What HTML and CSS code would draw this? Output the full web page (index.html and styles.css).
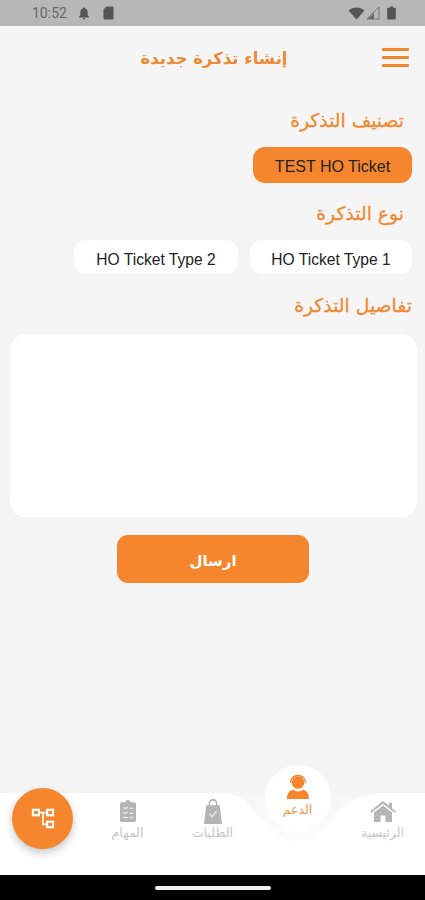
FILE: index.html
```html
<!DOCTYPE html>
<html lang="ar">
<head>
    <meta charset="UTF-8">
    <meta name="viewport" content="width=device-width, initial-scale=1.0">
    <title>إنشاء تذكرة جديدة</title>
    <link rel="stylesheet" href="styles.css">
</head>
<body>
    <div class="status-bar">
        <div class="status-left">
            <span class="status-time">10:52</span>
            <svg class="bell-icon" width="12" height="13" viewBox="0 0 12 13"><path d="M6 0.5c.7 0 1.1.5 1.1 1.1 1.7.5 2.6 1.9 2.6 3.7v3l1.3 1.5v.7H1v-.7l1.3-1.5v-3c0-1.800.9-3.200 2.600-3.700C4.900 1 5.300.5 6 .5zM4.700 11h2.600c0 .8-.6 1.500-1.300 1.500S4.700 11.800 4.700 11z" fill="#555"/></svg>
            <svg class="sim-icon" width="11" height="14" viewBox="0 0 11 14"><path d="M3.500.5H9.500a1 1 0 0 1 1 1v11a1 1 0 0 1-1 1h-8a1 1 0 0 1-1-1V3.500z" fill="#555"/></svg>
        </div>
        <div class="status-right">
            <svg width="17" height="13" viewBox="0 0 17 13"><path d="M.5 3.500C5-.5 12-.5 16.500 3.500L8.500 12.500z" fill="#555"/></svg>
            <svg width="14" height="14" viewBox="0 0 14 14"><path d="M13 1v12H1z" fill="none" stroke="#777" stroke-width="1"/><path d="M8 7v6H2z" fill="#666"/></svg>
            <svg class="battery-icon" width="9" height="14" viewBox="0 0 9 14"><path d="M3 .5h3v1.200h2a.8.8 0 0 1 .8.8v10.200a.8.8 0 0 1-.8.8H1a.8.8 0 0 1-.8-.8V2.500a.8.8 0 0 1 .8-.8h2z" fill="#555"/></svg>
        </div>
    </div>

    <header class="top-bar">
        <h1>إنشاء تذكرة جديدة</h1>
        <div class="menu-btn"><span></span><span></span><span></span></div>
    </header>

    <main class="content">
        <h2 class="section-title">تصنيف التذكرة</h2>
        <div class="chip-row">
            <div class="chip chip-active">TEST HO Ticket</div>
        </div>

        <h2 class="section-title section-title-second">نوع التذكرة</h2>
        <div class="chip-row">
            <div class="chip chip-type-one">HO Ticket Type 1</div>
            <div class="chip chip-type-two">HO Ticket Type 2</div>
        </div>

        <h2 class="section-title section-title-details">تفاصيل التذكرة</h2>
        <textarea class="details-box"></textarea>

        <button class="send-btn" type="button">ارسال</button>
    </main>

    <nav class="bottom-nav">
        <svg class="nav-notch" width="425" height="50" viewBox="0 0 425 50">
            <defs>
                <linearGradient id="notchFill" x1="0" y1="0" x2="0" y2="1">
                    <stop offset="0" stop-color="#f6f6f6"/>
                    <stop offset="1" stop-color="#fdfdfd"/>
                </linearGradient>
            </defs>
            <path d="M222 0C245 1 252 17 262 27C272 40 284 49 298 49C312 49 324 38 335 24C342 14 350 5 372 2L376 0Z" fill="url(#notchFill)"/>
        </svg>

        <div class="nav-cell">
            <div class="fab">
                <svg width="24" height="21" viewBox="0 0 26 23" fill="none" stroke="#fff" stroke-width="2.400">
                    <rect x="2" y="2" width="6.500" height="6"/>
                    <rect x="17.500" y="2" width="6.500" height="6"/>
                    <rect x="17.500" y="15" width="6.500" height="6"/>
                    <path d="M8.500 5H17.500M13 5V18H17.500" stroke-width="1.800"/>
                </svg>
            </div>
        </div>

        <div class="nav-cell nav-item">
            <svg width="16" height="22" viewBox="0 0 18 24" preserveAspectRatio="none">
                <path d="M6 2.500C6 1 7.300 0 9 0s3 1 3 2.500h4a2 2 0 0 1 2 2V22a2 2 0 0 1-2 2H2a2 2 0 0 1-2-2V4.500a2 2 0 0 1 2-2z" fill="#b5b5b5"/>
                <path d="M3.500 8.500h2l1 1 2-2M11 9h4M3.500 14h2l1 1 2-2M11 14.500h4M3.500 19h5M11 19h4" fill="none" stroke="#eee" stroke-width="1.300"/>
            </svg>
            <span class="nav-label">المهام</span>
        </div>

        <div class="nav-cell nav-item">
            <svg class="bag-icon" width="18" height="25" viewBox="0 0 20 24" preserveAspectRatio="none">
                <path d="M2.500 6H17.500L20 24H0z" fill="#b5b5b5"/>
                <path d="M6 8V4.500C6 2 7.800.8 10 .8S14 2 14 4.500V8" fill="none" stroke="#b5b5b5" stroke-width="1.600"/>
                <path d="M6 14l3 3 5-5.500" fill="none" stroke="#e8e8e8" stroke-width="1.500"/>
            </svg>
            <span class="nav-label">الطلبات</span>
        </div>

        <div class="nav-cell nav-support">
            <div class="support-circle">
                <svg width="22" height="24" viewBox="0 0 22 24">
                    <circle cx="11" cy="7.500" r="6.300" fill="#f5862d"/>
                    <path d="M3.500 8C3.500 3 7 .5 11 .5S18.500 3 18.500 8" fill="none" stroke="#f5862d" stroke-width="1.400"/>
                    <path d="M0 24c0-5 1.500-8 6-9.500 1.500 1.300 3 2 5 2s3.500-.7 5-2c4.500 1.500 6 4.500 6 9.500z" fill="#f5862d"/>
                    <path d="M5 12c1.500 3 4 3.500 7 3.300" fill="none" stroke="#fff" stroke-width="1"/>
                </svg>
                <span class="nav-label nav-label-active">الدعم</span>
            </div>
        </div>

        <div class="nav-cell nav-item">
            <svg width="26" height="22" viewBox="0 0 26 24" preserveAspectRatio="none">
                <path d="M13 1L0 12.500l1.300 1.500L13 4l11.700 10 1.300-1.500-4-3.500V3h-3v3.400z" fill="#b5b5b5"/>
                <path d="M13 6L4 13.600V24h6.500v-7h5v7H22V13.600z" fill="#b5b5b5"/>
            </svg>
            <span class="nav-label">الرئيسية</span>
        </div>
    </nav>

    <div class="gesture-bar"><span></span></div>
</body>
</html>
```

FILE: styles.css
```css
body {
    font-family: "DejaVu Sans", sans-serif;
    margin: 0;
    height: 900px;
    display: flex;
    flex-direction: column;
    background-color: #f5f5f5;
    overflow: hidden;
}
.status-bar {
    height: 26px;
    background-color: #b7b7b7;
    display: flex;
    align-items: center;
    justify-content: space-between;
    padding: 0 29px 0 32px;
}
.status-left {
    display: flex;
    align-items: center;
}
.status-right {
    display: flex;
    align-items: center;
    gap: 1px;
}
.status-time {
    font-family: Roboto, sans-serif;
    font-size: 14px;
    color: #666;
}
.bell-icon {
    margin-left: 11px;
}
.sim-icon {
    margin-left: 13px;
}
.battery-icon {
    margin-left: 6px;
}
.top-bar {
    height: 66px;
    box-sizing: border-box;
    display: flex;
    align-items: center;
    padding: 0 16px 4px 0;
}
.top-bar h1 {
    flex: 1;
    margin: 2px 0 0;
    padding-left: 46px;
    font-size: 16.500px;
    font-weight: bold;
    text-align: center;
    color: #ec8a37;
    direction: rtl;
    white-space: nowrap;
}
.menu-btn {
    width: 27px;
    display: flex;
    flex-direction: column;
    gap: 5px;
}
.menu-btn span {
    height: 3px;
    background-color: #f0842a;
    border-radius: 1px;
}
.content {
    flex: 1;
    display: flex;
    flex-direction: column;
    direction: rtl;
}
.section-title {
    margin: 18px 21px 0 0;
    font-size: 18.800px;
    font-weight: normal;
    line-height: 22px;
    color: #ef8a33;
    -webkit-text-stroke: 0.3px #ef8a33;
}
.section-title-second {
    margin-top: 20px;
}
.section-title-details {
    margin: 21px 13px 0 0;
}
.chip-row {
    display: flex;
    gap: 12px;
    margin-top: 15px;
    padding-right: 13px;
}
.chip {
    font-family: "Liberation Sans", Arial, sans-serif;
    font-size: 15.600px;
    color: #222;
    background-color: #fff;
    height: 34px;
    box-sizing: border-box;
    padding-top: 5px;
    border-radius: 12px;
    display: flex;
    align-items: center;
    justify-content: center;
    direction: ltr;
}
.chip-active {
    width: 159px;
    height: 36px;
    padding-top: 4px;
    font-size: 16px;
    background-color: #f5862d;
}
.chip-type-one {
    width: 162px;
}
.chip-type-two {
    width: 164px;
}
.details-box {
    display: block;
    width: 407px;
    height: 183px;
    margin: 17px 8px 0 0;
    padding: 12px;
    box-sizing: border-box;
    border: none;
    border-radius: 16px;
    background-color: #fff;
    resize: none;
    outline: none;
}
.send-btn {
    align-self: flex-start;
    width: 192px;
    height: 48px;
    margin: 18px 116px 0 0;
    padding-top: 5px;
    border: none;
    border-radius: 11px;
    background-color: #f5862d;
    color: #fff;
    font-family: "DejaVu Sans", sans-serif;
    font-size: 15px;
    font-weight: bold;
}
.bottom-nav {
    position: relative;
    height: 82px;
    background-color: #fff;
    display: grid;
    grid-template-columns: repeat(5, 85px);
    align-items: start;
}
.nav-notch {
    position: absolute;
    left: 0;
    top: 0;
}
.nav-cell {
    position: relative;
    display: flex;
    flex-direction: column;
    align-items: center;
}
.nav-item {
    padding-top: 7px;
}
.bag-icon {
    margin-top: -1px;
    margin-bottom: -2px;
}
.nav-label {
    font-size: 12.500px;
    line-height: 14px;
    margin-top: 4px;
    color: #c6c6c6;
    direction: rtl;
    white-space: nowrap;
}
.nav-label-active {
    color: #f2994f;
}
.fab {
    width: 61px;
    height: 61px;
    margin-top: -5px;
    border-radius: 50%;
    background-color: #f5862d;
    box-shadow: 0 4px 8px rgba(0,0,0,0.22);
    display: flex;
    align-items: center;
    justify-content: center;
}
.nav-support {
    margin-top: -28px;
}
.support-circle {
    width: 66px;
    height: 66px;
    box-sizing: border-box;
    padding-top: 10px;
    border-radius: 50%;
    background-color: #fff;
    display: flex;
    flex-direction: column;
    align-items: center;
}
.gesture-bar {
    height: 25px;
    background-color: #000;
    display: flex;
    align-items: center;
    justify-content: center;
}
.gesture-bar span {
    width: 116px;
    height: 4px;
    border-radius: 2px;
    background-color: #eee;
}
```
